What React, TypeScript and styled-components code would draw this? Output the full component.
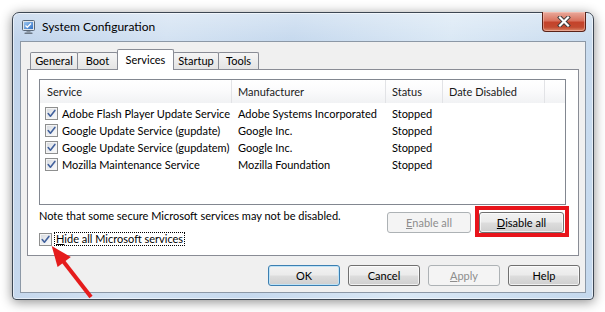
import styled, { createGlobalStyle } from 'styled-components';

const GlobalStyle = createGlobalStyle`
  html, body {
    margin: 0;
    padding: 0;
    background: #ffffff;
  }
  body {
    font-family: Lato, "Noto Sans", sans-serif;
    font-size: 11px;
    color: #000;
  }
  #root {
    width: 605px;
    height: 312px;
    overflow: hidden;
  }
`;

type Service = { name: string; maker: string; status: string };

const services: Service[] = [
  { name: 'Adobe Flash Player Update Service', maker: 'Adobe Systems Incorporated', status: 'Stopped' },
  { name: 'Google Update Service (gupdate)', maker: 'Google Inc.', status: 'Stopped' },
  { name: 'Google Update Service (gupdatem)', maker: 'Google Inc.', status: 'Stopped' },
  { name: 'Mozilla Maintenance Service', maker: 'Mozilla Foundation', status: 'Stopped' },
];

const tabs = [
  { label: 'General', width: 48 },
  { label: 'Boot', width: 41 },
  { label: 'Services', width: 57, active: true },
  { label: 'Startup', width: 46 },
  { label: 'Tools', width: 41 },
];

const Check = () => (
  <CheckBox>
    <svg width="11" height="11" viewBox="0 0 11 11">
      <path d="M2.2 5.6 L4.4 8.2 L8.9 2.4" fill="none" stroke="#41609c" strokeWidth="1.6" strokeLinecap="round" strokeLinejoin="round" />
    </svg>
  </CheckBox>
);

const AppIcon = () => (
  <svg width="16" height="16" viewBox="0 0 16 16">
    <defs>
      <linearGradient id="scr" x1="0" y1="0" x2="1" y2="1">
        <stop offset="0" stopColor="#9cc6f0" />
        <stop offset="1" stopColor="#2f6fc4" />
      </linearGradient>
    </defs>
    <rect x="1.5" y="1.5" width="12" height="10" rx="1" fill="#dfe4ea" stroke="#5a6878" />
    <rect x="3" y="3" width="9" height="7" fill="url(#scr)" />
    <path d="M4.5 6.5 L6.3 8.3 L10 4.5" fill="none" stroke="#ffffff" strokeWidth="1.3" />
    <rect x="5.5" y="12" width="4" height="1.5" fill="#8a96a4" />
    <rect x="3.5" y="13.5" width="8" height="1.5" rx="0.5" fill="#6c7886" />
  </svg>
);

export default function App() {
  return (
    <Stage>
      <GlobalStyle />
      <Window>
        <TitleBar>
          <AppIcon />
          <Title>System Configuration</Title>
          <CloseButton>
            <svg width="14" height="11" viewBox="0 0 14 11">
              <path d="M3 1.5 L11 9.5 M11 1.5 L3 9.5" stroke="#3a3a3a" strokeWidth="4" strokeLinecap="square" />
              <path d="M3 1.5 L11 9.5 M11 1.5 L3 9.5" stroke="#ffffff" strokeWidth="2.2" strokeLinecap="square" />
            </svg>
          </CloseButton>
        </TitleBar>

        <Client>
          <TabStrip>
            {tabs.map((t) => (
              <Tab key={t.label} $active={t.active} $width={t.width}>
                {t.label}
              </Tab>
            ))}
          </TabStrip>

          <Panel>
            <ListView>
              <HeaderRow>
                <HeaderCell $first>Service</HeaderCell>
                <HeaderCell>Manufacturer</HeaderCell>
                <HeaderCell>Status</HeaderCell>
                <HeaderCell>Date Disabled</HeaderCell>
                <HeaderCell />
              </HeaderRow>
              <ListBody>
                {services.map((s) => (
                  <Row key={s.name}>
                    <NameCell>
                      <Check />
                      <span>{s.name}</span>
                    </NameCell>
                    <Cell>{s.maker}</Cell>
                    <Cell>{s.status}</Cell>
                    <Cell />
                    <Cell />
                  </Row>
                ))}
              </ListBody>
            </ListView>

            <PanelFooter>
              <FooterLeft>
                <Note>Note that some secure Microsoft services may not be disabled.</Note>
                <HideRow>
                  <Check />
                  <FocusLabel>
                    <Key>H</Key>ide all Microsoft services
                  </FocusLabel>
                </HideRow>
              </FooterLeft>
              <FooterButtons>
                <Button $width={84} $kind="disabled">
                  <Key>E</Key>nable all
                </Button>
                <Highlight>
                  <Button $width={85}>
                    <Key>D</Key>isable all
                  </Button>
                </Highlight>
              </FooterButtons>
            </PanelFooter>
          </Panel>

          <DialogButtons>
            <Button $width={72} $kind="default">OK</Button>
            <Button $width={72}>Cancel</Button>
            <Button $width={72} $kind="disabled">
              <Key>A</Key>pply
            </Button>
            <Button $width={72}>Help</Button>
          </DialogButtons>
        </Client>

        <Arrow width="64" height="64" viewBox="40 240 64 64">
          <path d="M91 297 L63 261" stroke="#e51c1c" strokeWidth="4" strokeLinecap="butt" />
          <polygon points="51.7,246 70.8,257 57.6,267" fill="#e51c1c" />
        </Arrow>
      </Window>
    </Stage>
  );
}

const Stage = styled.div`
  width: 605px;
  height: 312px;
  box-sizing: border-box;
  padding: 12px 0 0 12px;
`;

const Window = styled.div`
  position: relative;
  box-sizing: border-box;
  width: 582px;
  height: 288px;
  display: flex;
  flex-direction: column;
  padding: 0 7px 6px 7px;
  border: 1px solid #3d4753;
  border-radius: 7px 7px 4px 4px;
  background:
    linear-gradient(to bottom, rgba(255, 255, 255, 0.3), rgba(255, 255, 255, 0) 28px),
    linear-gradient(100deg, #bfd3eb 0%, #d3e2f2 25%, #c6d9ee 45%, #dae8f5 70%, #c4d8ed 100%);
  box-shadow:
    inset 0 0 0 1px rgba(255, 255, 255, 0.55),
    0 2px 12px rgba(0, 0, 0, 0.45);
`;

const TitleBar = styled.div`
  height: 28px;
  display: flex;
  align-items: center;
  padding-left: 1px;
  flex-shrink: 0;
`;

const Title = styled.span`
  margin-left: 5px;
  font-size: 12px;
  color: #000;
  padding-bottom: 1px;
`;

const CloseButton = styled.div`
  margin-left: auto;
  align-self: flex-start;
  margin-top: -1px;
  width: 44px;
  height: 20px;
  box-sizing: border-box;
  display: flex;
  align-items: center;
  justify-content: center;
  border: 1px solid #5a2218;
  border-top: none;
  border-radius: 0 0 4px 4px;
  background: linear-gradient(to bottom, #e9aa9c 0%, #d9735f 45%, #c4432b 55%, #c24a30 80%, #dc8a6c 100%);
  box-shadow: inset 0 0 0 1px rgba(255, 210, 200, 0.45);
`;

const Client = styled.div`
  box-sizing: border-box;
  height: 252px;
  display: flex;
  flex-direction: column;
  padding: 7px 6px 6px 6px;
  border: 1px solid #8c98a6;
  background: #f0f0f0;
`;

const TabStrip = styled.div`
  position: relative;
  z-index: 2;
  height: 21px;
  margin-bottom: -1px;
  padding-left: 3px;
  display: flex;
  align-items: flex-start;
  flex-shrink: 0;
`;

const Tab = styled.div<{ $active?: boolean; $width: number }>`
  box-sizing: border-box;
  width: ${(p) => p.$width}px;
  height: ${(p) => (p.$active ? 21 : 17)}px;
  margin-top: ${(p) => (p.$active ? 0 : 3)}px;
  margin-left: -1px;
  display: flex;
  align-items: center;
  justify-content: center;
  padding-bottom: ${(p) => (p.$active ? 2 : 1)}px;
  border: 1px solid #898c95;
  border-bottom: none;
  border-radius: 2px 2px 0 0;
  background: ${(p) => (p.$active ? '#ffffff' : 'linear-gradient(to bottom, #f5f5f5, #e4e4e4)')};
  position: relative;
  z-index: ${(p) => (p.$active ? 2 : 1)};
  &:first-child {
    margin-left: 0;
  }
`;

const Panel = styled.div`
  box-sizing: border-box;
  height: 187px;
  flex-shrink: 0;
  display: flex;
  flex-direction: column;
  padding: 9px 12px 0 11px;
  border: 1px solid #898c95;
  background: #ffffff;
`;

const ListView = styled.div`
  box-sizing: border-box;
  height: 126px;
  flex-shrink: 0;
  border: 1px solid #828790;
  background: #ffffff;
`;

const columns = '192px 154px 57px 102px 1fr';

const HeaderRow = styled.div`
  display: grid;
  grid-template-columns: ${columns};
  height: 23px;
  background: linear-gradient(to bottom, #ffffff 0%, #fbfbfc 45%, #f1f2f4 100%);
`;

const HeaderCell = styled.div<{ $first?: boolean }>`
  display: flex;
  align-items: center;
  padding-left: ${(p) => (p.$first ? 7 : 6)}px;
  padding-bottom: 1px;
  border-right: 1px solid #e2e3e6;
  color: #1a1a1a;
  white-space: nowrap;
  &:last-child {
    border-right: none;
  }
`;

const ListBody = styled.div`
  padding-top: 2px;
`;

const Row = styled.div`
  display: grid;
  grid-template-columns: ${columns};
  height: 17px;
  align-items: center;
`;

const Cell = styled.div`
  padding-left: 6px;
  white-space: nowrap;
`;

const NameCell = styled.div`
  display: flex;
  align-items: center;
  gap: 4px;
  padding-left: 5px;
  white-space: nowrap;
`;

const CheckBox = styled.span`
  box-sizing: border-box;
  width: 13px;
  height: 13px;
  flex-shrink: 0;
  display: inline-flex;
  align-items: center;
  justify-content: center;
  border: 1px solid #8e8f8f;
  background: linear-gradient(135deg, #d4d7dc 0%, #eceef1 55%, #fbfbfb 100%);
  box-shadow: inset 0 0 0 1px #f4f4f4;
`;

const PanelFooter = styled.div`
  display: flex;
  justify-content: space-between;
  margin-top: 3px;
  padding-right: 2px;
`;

const FooterLeft = styled.div`
  display: flex;
  flex-direction: column;
`;

const Note = styled.div`
  line-height: 15px;
  white-space: nowrap;
`;

const HideRow = styled.div`
  display: flex;
  align-items: center;
  gap: 2px;
  margin-top: 9px;
  height: 14px;
`;

const FocusLabel = styled.span`
  border: 1px dotted #000;
  padding: 0 1px;
  line-height: 12px;
  white-space: nowrap;
`;

const Key = styled.span`
  text-decoration: underline;
`;

const FooterButtons = styled.div`
  display: flex;
  gap: 8px;
  margin-top: 4px;
  align-items: flex-start;
`;

/* red annotation box drawn round the "Disable all" button; negative margin keeps the layout */
const Highlight = styled.div`
  border: 4px solid #e8141b;
  padding: 2px 1px 0 0;
  margin: -6px -5px -4px -4px;
  position: relative;
  z-index: 1;
`;

const Button = styled.div<{ $width: number; $kind?: 'default' | 'disabled' }>`
  box-sizing: border-box;
  width: ${(p) => p.$width}px;
  height: 21px;
  display: flex;
  align-items: center;
  justify-content: center;
  padding-bottom: 1px;
  border-radius: 3px;
  border: 1px solid
    ${(p) => (p.$kind === 'default' ? '#3c7fb1' : p.$kind === 'disabled' ? '#adb2b5' : '#707070')};
  color: ${(p) => (p.$kind === 'disabled' ? '#8d8d8d' : '#000')};
  background: ${(p) =>
    p.$kind === 'disabled'
      ? '#f4f4f4'
      : 'linear-gradient(to bottom, #f2f2f2 0%, #ebebeb 48%, #dddddd 52%, #cfcfcf 100%)'};
  box-shadow: ${(p) =>
    p.$kind === 'default'
      ? 'inset 0 0 0 1px #bfe3f7'
      : p.$kind === 'disabled'
        ? 'none'
        : 'inset 0 0 0 1px rgba(255, 255, 255, 0.7)'};
`;

const DialogButtons = styled.div`
  display: flex;
  justify-content: flex-end;
  gap: 8px;
  margin-top: 9px;
  margin-right: -1px;
`;

const Arrow = styled.svg`
  position: absolute;
  left: 27px;
  top: 227px;
  pointer-events: none;
  overflow: visible;
`;
